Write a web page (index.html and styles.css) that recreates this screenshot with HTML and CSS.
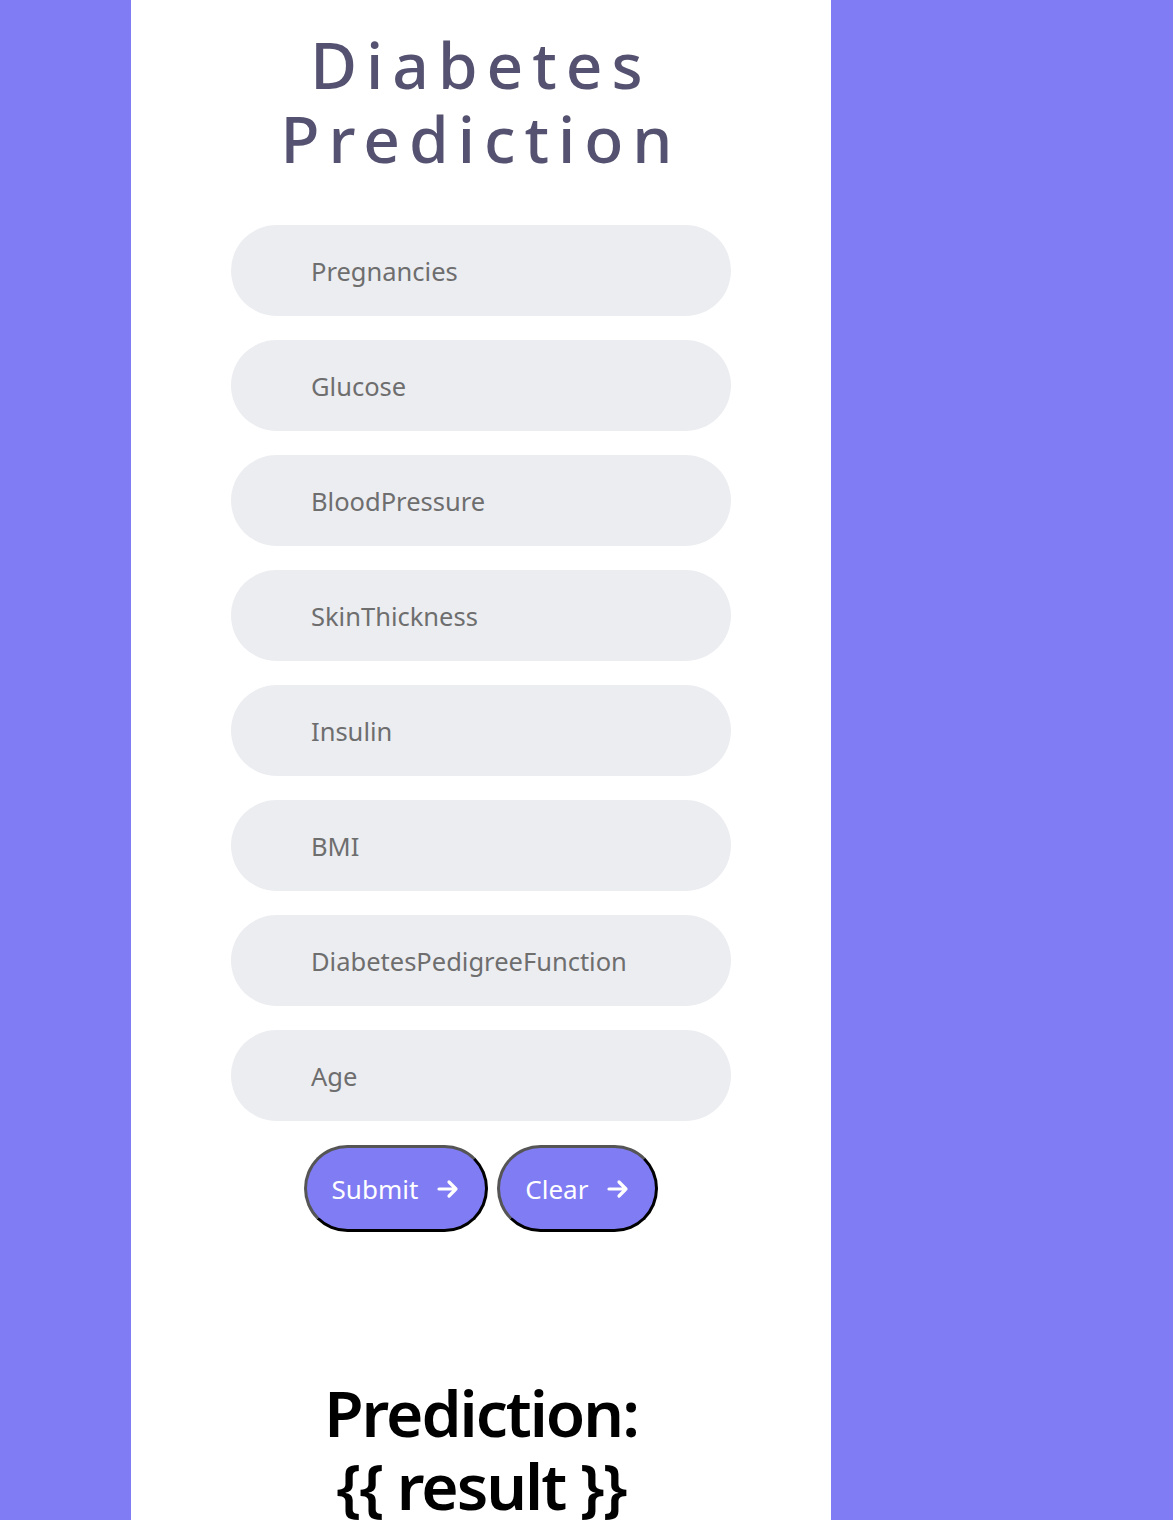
FILE: index.html
```html
<!DOCTYPE html>
<html>
<head>
<meta charset="utf-8">
<link rel="stylesheet" href="styles.css">
</head>
<body>
<div class="page">
  <h1 class="title">Diabetes Prediction</h1>
  <form class="form">
    <input class="field" type="text" placeholder="Pregnancies">
    <input class="field" type="text" placeholder="Glucose">
    <input class="field" type="text" placeholder="BloodPressure">
    <input class="field" type="text" placeholder="SkinThickness">
    <input class="field" type="text" placeholder="Insulin">
    <input class="field" type="text" placeholder="BMI">
    <input class="field" type="text" placeholder="DiabetesPedigreeFunction">
    <input class="field" type="text" placeholder="Age">
    <div class="actions">
      <button type="button" class="btn">Submit <svg class="arrow" viewBox="0 0 24 24"><path d="M3 12H20M13 5L20 12L13 19"/></svg></button>
      <button type="button" class="btn">Clear <svg class="arrow" viewBox="0 0 24 24"><path d="M3 12H20M13 5L20 12L13 19"/></svg></button>
    </div>
  </form>
  <h2 class="result">Prediction:<br>{{ result }}</h2>
</div>
</body>
</html>
```
FILE: styles.css
```css
html, body {
  margin: 0;
  padding: 0;
}
body {
  background: #807cf3;
  font-family: "Noto Sans", "Open Sans", sans-serif;
  min-height: 1520px;
}
.page {
  width: 700px;
  margin-left: 131px;
  background: #ffffff;
  min-height: 1520px;
  display: flex;
  flex-direction: column;
  align-items: center;
  overflow: hidden;
}
.title {
  margin: 28px 0 0 0;
  width: 440px;
  text-align: center;
  font-size: 64px;
  line-height: 74px;
  font-weight: 500;
  letter-spacing: 9px;
  color: #545270;
}
.form {
  margin-top: 49px;
  display: flex;
  flex-direction: column;
  align-items: center;
  gap: 24px;
}
.field {
  box-sizing: border-box;
  width: 500px;
  height: 91px;
  border: none;
  border-radius: 46px;
  background: #ecedf1;
  padding: 0 0 0 80px;
  font-family: inherit;
  font-size: 25.5px;
  color: #333;
  outline: none;
}
.field::placeholder {
  color: #6e6e6e;
}
.actions {
  display: flex;
  gap: 9px;
  margin-top: 0;
}
.btn {
  box-sizing: border-box;
  height: 87px;
  padding: 0 25px;
  border: 3px solid;
  border-color: #555 #000 #000 #555;
  border-radius: 44px;
  background: #807cf3;
  color: #ffffff;
  font-family: inherit;
  font-size: 26px;
  display: flex;
  align-items: center;
  gap: 18px;
}
.arrow {
  width: 24px;
  height: 24px;
  fill: none;
  stroke: #ffffff;
  stroke-width: 3.2;
  stroke-linecap: round;
  stroke-linejoin: round;
}
.result {
  margin: 144px 0 0 0;
  text-align: center;
  font-size: 64px;
  line-height: 73px;
  font-weight: 600;
  letter-spacing: -2px;
  color: #000;
}
```
